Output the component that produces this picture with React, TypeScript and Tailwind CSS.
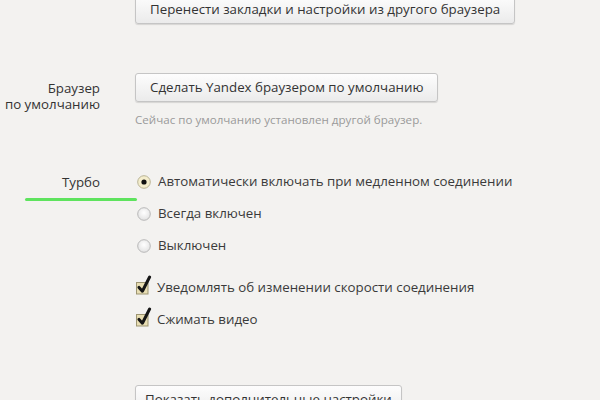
import React from "react";

const font = { fontFamily: '"Open Sans", "Noto Sans", sans-serif' };

function Btn({ children, className = "" }: { children: React.ReactNode; className?: string }) {
  return (
    <div
      className={`inline-flex items-center h-[29px] border border-[#c5c5c5] rounded-[3px] bg-gradient-to-b from-[#fdfdfd] to-[#ebebeb] shadow-[0_1px_1px_rgba(0,0,0,0.12)] text-[13.3px] text-[#333] whitespace-nowrap ${className}`}
    >
      {children}
    </div>
  );
}

function Radio({ checked }: { checked?: boolean }) {
  return (
    <svg width="14" height="14" viewBox="0 0 14 14" className="shrink-0">
      <defs>
        <radialGradient id="rg" cx="50%" cy="40%" r="60%">
          <stop offset="0%" stopColor="#ffffff" />
          <stop offset="100%" stopColor="#e2e2e2" />
        </radialGradient>
      </defs>
      <circle cx="7" cy="7" r="6.3" fill={checked ? "#f4edcc" : "url(#rg)"} stroke={checked ? "#b9b395" : "#b8b8b8"} strokeWidth="1" />
      {checked && <circle cx="7" cy="7" r="2.6" fill="#111" />}
    </svg>
  );
}

function Check() {
  return (
    <svg width="17" height="20" viewBox="0 0 17 20" className="shrink-0 -mt-[6px]">
      <rect x="1.5" y="7.5" width="11.5" height="11.5" fill="#e8deb3" stroke="#9d9572" strokeWidth="1" />
      <path d="M4 12.4 L7.4 16.2 L14.6 2" fill="none" stroke="#151515" strokeWidth="3" strokeLinecap="round" strokeLinejoin="round" />
    </svg>
  );
}

export default function App() {
  return (
    <div className="w-[600px] h-[400px] overflow-hidden bg-[#f3f2f0] text-[#333]" style={font}>
      <div className="grid grid-cols-[100px_1fr] gap-x-[35px]">
        {/* Import button */}
        <div />
        <div className="-mt-[5px]">
          <Btn className="px-[14px]">Перенести закладки и настройки из другого браузера</Btn>
        </div>

        {/* Default browser */}
        <div className="mt-[49px] text-right text-[13.3px] leading-[16px] pt-[7px]">
          Браузер
          <br />
          по умолчанию
        </div>
        <div className="mt-[49px]">
          <Btn className="px-[14px]">Сделать Yandex браузером по умолчанию</Btn>
          <div className="mt-[10px] text-[11.6px] leading-[16px] text-[#9a9a9a]">
            Сейчас по умолчанию установлен другой браузер.
          </div>
        </div>

        {/* Turbo */}
        <div className="relative mt-[44px] h-[20px] text-right text-[13.3px] leading-[20px]">
          Турбо
          <div className="absolute left-[25px] top-[26px] w-[112px] h-[3px] rounded-full bg-[#5ee35e]" />
        </div>
        <div className="mt-[44px] flex flex-col gap-y-[11px] text-[13.3px] text-[#3a3a3a]">
          <div className="flex items-center h-[20px] pl-[2px] gap-[7px]">
            <Radio checked />
            <span>Автоматически включать при медленном соединении</span>
          </div>
          <div className="flex items-center h-[20px] mt-[1px] pl-[2px] gap-[7px]">
            <Radio />
            <span>Всегда включен</span>
          </div>
          <div className="flex items-center h-[20px] mt-[1px] pl-[2px] gap-[7px]">
            <Radio />
            <span>Выключен</span>
          </div>
          <div className="flex items-center h-[20px] mt-[11px] pl-[0px] gap-[5px]">
            <Check />
            <span>Уведомлять об изменении скорости соединения</span>
          </div>
          <div className="flex items-center h-[20px] mt-[1px] pl-[0px] gap-[5px]">
            <Check />
            <span>Сжимать видео</span>
          </div>
          <div className="mt-[44px]">
            <Btn className="px-[9px] h-[30px]">Показать дополнительные настройки</Btn>
          </div>
        </div>
      </div>
    </div>
  );
}
